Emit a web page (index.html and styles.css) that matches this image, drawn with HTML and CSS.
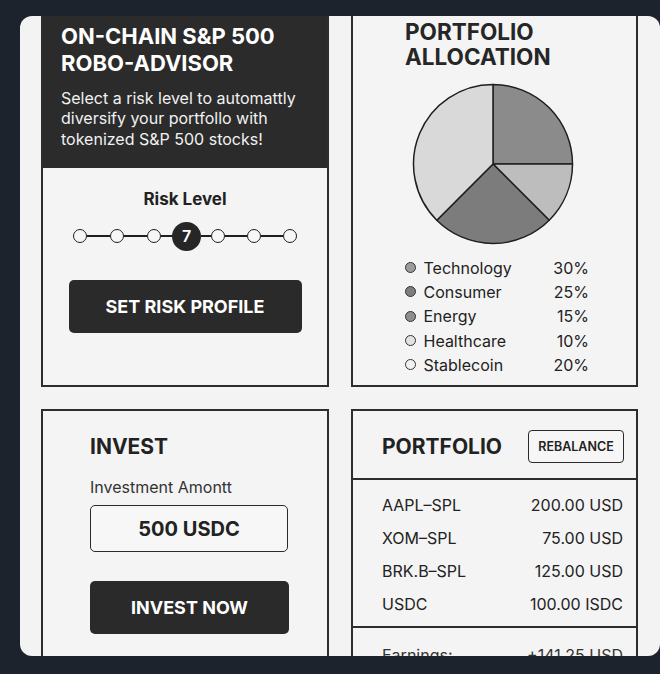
FILE: index.html
```html
<!DOCTYPE html>
<html lang="en">
<head>
<meta charset="utf-8">
<title>On-Chain S&amp;P 500 Robo-Advisor</title>
<link rel="stylesheet" href="styles.css">
</head>
<body>
<div class="card">
  <div class="grid">
    <section class="panel advisor">
      <div class="advisor-head">
        <h1 class="advisor-title">ON-CHAIN S&amp;P 500<br>ROBO-ADVISOR</h1>
        <p class="advisor-sub">Select a risk level to automattly<br>diversify your portfollo with<br>tokenized S&amp;P 500 stocks!</p>
      </div>
      <div class="risk">
        <h2 class="risk-label">Risk Level</h2>
        <div class="slider">
          <span class="node"></span><span class="seg seg-long"></span>
          <span class="node"></span><span class="seg seg-long"></span>
          <span class="node"></span><span class="seg seg-short"></span>
          <span class="node node-active">7</span><span class="seg seg-short2"></span>
          <span class="node"></span><span class="seg seg-mid"></span>
          <span class="node"></span><span class="seg seg-mid"></span>
          <span class="node"></span>
        </div>
        <button class="btn btn-risk">SET RISK PROFILE</button>
      </div>
    </section>

    <section class="panel allocation">
      <h2 class="alloc-title">PORTFOLIO<br>ALLOCATION</h2>
      <svg class="pie" width="162" height="162" viewBox="0 0 162 162">
        <path d="M81 81 L81 1.5 A79.5 79.5 0 0 1 160.5 81 Z" fill="#8b8b8b" stroke="#1f1f1f" stroke-width="1.5" stroke-linejoin="round"/>
        <path d="M81 81 L160.5 81 A79.5 79.5 0 0 1 137.2 137.2 Z" fill="#bdbdbd" stroke="#1f1f1f" stroke-width="1.5" stroke-linejoin="round"/>
        <path d="M81 81 L137.2 137.2 A79.5 79.5 0 0 1 24.8 137.2 Z" fill="#7c7c7c" stroke="#1f1f1f" stroke-width="1.5" stroke-linejoin="round"/>
        <path d="M81 81 L24.8 137.2 A79.5 79.5 0 0 1 81 1.5 Z" fill="#d9d9d9" stroke="#1f1f1f" stroke-width="1.5" stroke-linejoin="round"/>
      </svg>
      <ul class="legend">
        <li class="legend-item"><span class="dot dot-tech"></span><span class="legend-name">Technology</span><span class="legend-pct">30%</span></li>
        <li class="legend-item"><span class="dot dot-cons"></span><span class="legend-name">Consumer</span><span class="legend-pct">25%</span></li>
        <li class="legend-item"><span class="dot dot-energy"></span><span class="legend-name">Energy</span><span class="legend-pct">15%</span></li>
        <li class="legend-item"><span class="dot dot-health"></span><span class="legend-name">Healthcare</span><span class="legend-pct">10%</span></li>
        <li class="legend-item"><span class="dot dot-stable"></span><span class="legend-name">Stablecoin</span><span class="legend-pct">20%</span></li>
      </ul>
    </section>

    <section class="panel invest">
      <h2 class="invest-title">INVEST</h2>
      <label class="invest-label">Investment Amontt</label>
      <div class="amount">500 USDC</div>
      <button class="btn btn-invest">INVEST NOW</button>
    </section>

    <section class="panel holdings">
      <div class="holdings-head">
        <h2 class="holdings-title">PORTFOLIO</h2>
        <button class="btn-outline">REBALANCE</button>
      </div>
      <div class="holdings-list">
        <div class="row"><span>AAPL–SPL</span><span>200.00 USD</span></div>
        <div class="row"><span>XOM–SPL</span><span>75.00 USD</span></div>
        <div class="row"><span>BRK.B–SPL</span><span>125.00 USD</span></div>
        <div class="row"><span>USDC</span><span>100.00 ISDC</span></div>
      </div>
      <div class="holdings-foot">
        <div class="row row-earn"><span>Earnings:</span><span>+141.25 USD</span></div>
      </div>
    </section>
  </div>
</div>
</body>
</html>
```

FILE: styles.css
```css
* { box-sizing: border-box; }

body {
  margin: 0;
  background: #1c232c;
  font-family: Inter, "Noto Sans", "Liberation Sans", sans-serif;
  color: #222;
}

.card {
  margin: 16px 0 0 20px;
  width: 640px;
  height: 640px;
  background: #f3f3f3;
  border-radius: 12px;
  overflow: hidden;
}

.grid {
  display: grid;
  grid-template-columns: 288px 287px;
  grid-template-rows: 383px 300px;
  column-gap: 22px;
  row-gap: 22px;
  padding-left: 21px;
  margin-top: -12px;
}

.panel {
  border: 2px solid #2d2d2d;
  background: #f4f4f4;
}

/* ---------- advisor ---------- */
.advisor-head {
  background: #2b2b2b;
  color: #fff;
  padding: 17px 18px 19px 18px;
}

.advisor-title {
  margin: 0;
  font-size: 22px;
  line-height: 27px;
  font-weight: 700;
}

.advisor-sub {
  margin: 10.5px 0 0;
  font-size: 16px;
  line-height: 20.5px;
  color: #f1f1f1;
}

.risk {
  display: flex;
  flex-direction: column;
  align-items: center;
  padding-top: 21px;
}

.risk-label {
  margin: 0;
  font-size: 17px;
  line-height: 20px;
  font-weight: 700;
}

.slider {
  display: flex;
  align-items: center;
  margin-top: 12.5px;
  height: 29px;
}

.node {
  width: 14px;
  height: 14px;
  border: 1.5px solid #1f1f1f;
  border-radius: 50%;
  background: #f6f6f6;
}

.node-active {
  width: 29px;
  height: 29px;
  border: none;
  background: #262626;
  color: #fff;
  font-size: 16px;
  font-weight: 600;
  display: flex;
  align-items: center;
  justify-content: center;
}

.seg {
  height: 1.5px;
  background: #1f1f1f;
}
.seg-long { width: 23px; }
.seg-short { width: 11px; }
.seg-short2 { width: 10px; }
.seg-mid { width: 22px; }

.btn {
  border: none;
  border-radius: 5px;
  background: #2a2a2a;
  color: #fff;
  font-family: inherit;
  font-weight: 700;
  font-size: 18px;
  cursor: pointer;
}

.btn-risk {
  margin-top: 29.5px;
  width: 233px;
  height: 53px;
}

/* ---------- allocation ---------- */
.allocation {
  padding: 12.5px 0 0 52px;
}

.alloc-title {
  margin: 0;
  font-size: 22.5px;
  line-height: 25px;
  font-weight: 700;
  color: #262626;
}

.pie {
  display: block;
  margin: 14px 0 0 7px;
}

.legend {
  list-style: none;
  margin: 11px 0 0;
  padding: 0;
  width: 184px;
}

.legend-item {
  display: flex;
  align-items: center;
  height: 24.3px;
  font-size: 16px;
  color: #222;
}

.dot {
  width: 11px;
  height: 11px;
  border-radius: 50%;
  border: 1px solid #333;
  margin-right: 7.5px;
  flex: none;
}
.dot-tech { background: #9c9c9c; }
.dot-cons { background: #7e7e7e; }
.dot-energy { background: #8e8e8e; }
.dot-health { background: #e2e2e2; }
.dot-stable { background: #f2f2f2; }

.legend-name { flex: 1; }
.legend-pct { text-align: right; }

/* ---------- invest ---------- */
.invest {
  padding: 23px 0 0 47px;
}

.invest-title {
  margin: 0;
  font-size: 21px;
  line-height: 25px;
  font-weight: 700;
}

.invest-label {
  display: block;
  margin-top: 18px;
  font-size: 16px;
  line-height: 20px;
  color: #333;
}

.amount {
  margin-top: 8px;
  width: 198px;
  height: 47px;
  border: 1.5px solid #2a2a2a;
  border-radius: 5px;
  display: flex;
  align-items: center;
  justify-content: center;
  font-size: 20px;
  font-weight: 700;
  background: #f7f7f7;
}

.btn-invest {
  display: block;
  margin-top: 29px;
  width: 199px;
  height: 53px;
}

/* ---------- holdings ---------- */
.holdings-head {
  display: flex;
  align-items: center;
  justify-content: space-between;
  height: 64px;
  padding: 3px 12px 0 29px;
  border-bottom: 2px solid #2d2d2d;
  box-sizing: content-box;
}

.holdings-title {
  margin: 0;
  font-size: 21px;
  font-weight: 700;
}

.btn-outline {
  width: 96px;
  height: 33px;
  border: 1.5px solid #2a2a2a;
  border-radius: 4px;
  background: #f6f6f6;
  font-family: inherit;
  font-size: 12.5px;
  font-weight: 600;
  color: #222;
}

.holdings-list {
  padding: 8px 13px 6px 29px;
  border-bottom: 2px solid #2d2d2d;
}

.row {
  display: flex;
  justify-content: space-between;
  align-items: center;
  height: 33px;
  font-size: 16px;
  color: #222;
}

.holdings-foot {
  padding: 10px 13px 0 29px;
}

.row-earn { color: #333; }
```
